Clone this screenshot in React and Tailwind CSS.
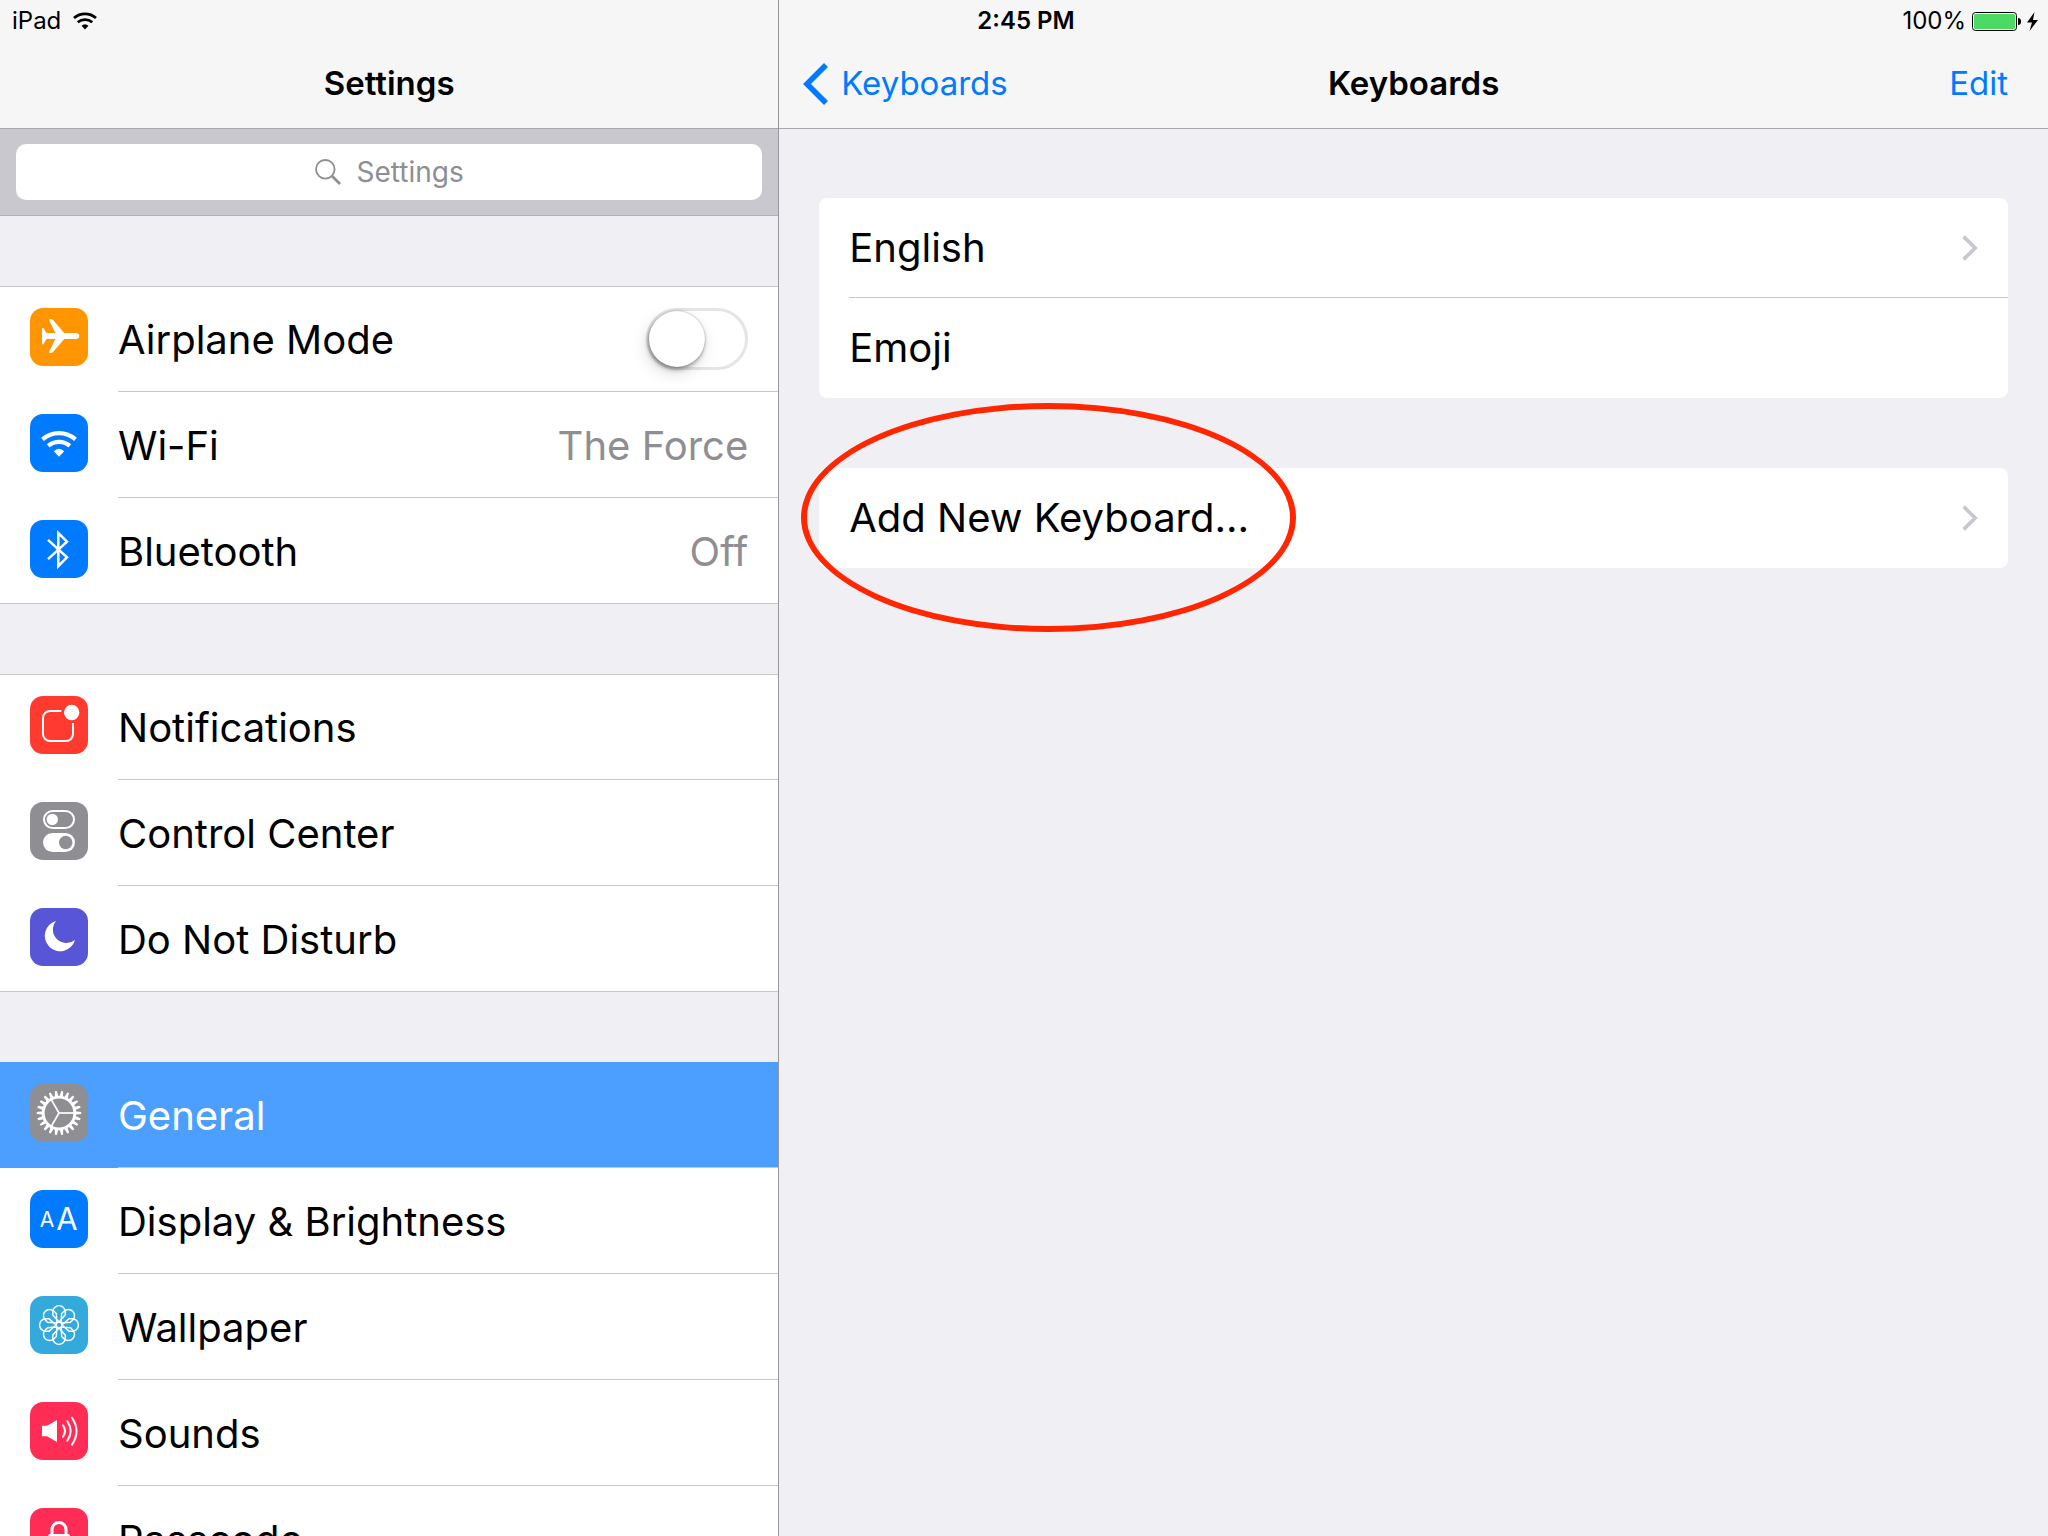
const tiles = {
  airplane: {
    color: "bg-[#ff9500]",
    art: (
      <path
        fill="currentColor"
        d="M12 20H13.5L16.5 25H25.3L19 12Q19 11 20 11H21.3Q22.2 11 23 12L34.3 25H46Q49.3 25.4 49.3 28T46 31H34.3L23 44Q22.2 45 21.3 45H20Q19 45 19 44L25.3 31H16.5L13.5 36.3H12Z"
      />
    ),
  },
  wifi: { color: "bg-[#007aff]", art: <WifiWaves /> },
  bluetooth: {
    color: "bg-[#007aff]",
    art: (
      <path
        stroke="currentColor"
        strokeWidth="2.5"
        d="M18 19.8L37 37.3L28.3 46.2V13L37 21.7L18 39.2"
      />
    ),
  },
  notifications: {
    color: "bg-[#ff3b30]",
    art: (
      <>
        <path
          stroke="currentColor"
          strokeWidth="2"
          d="M31.3 15H20A7 7 0 0 0 13 22V38A7 7 0 0 0 20 45H36A7 7 0 0 0 43 38V27"
        />
        <circle cx="41.7" cy="16.5" r="7.7" fill="currentColor" />
      </>
    ),
  },
  control: {
    color: "bg-[#8e8e93]",
    art: (
      <>
        <rect x="14" y="9" width="30" height="17" rx="8.5" stroke="currentColor" strokeWidth="2" />
        <circle cx="22.3" cy="17.5" r="5.7" fill="currentColor" />
        <rect x="13" y="31" width="32" height="19" rx="9.5" fill="currentColor" />
        <circle cx="35.7" cy="40.5" r="6.7" fill="#8e8e93" />
      </>
    ),
  },
  moon: {
    color: "bg-[#5856d6]",
    art: (
      <path
        fill="currentColor"
        d="M26 13A15.4 15.4 0 1 0 45 32A13.5 13.5 0 0 1 26 13Z"
      />
    ),
  },
  general: {
    color: "bg-[#8e8e93]",
    art: (
      <g stroke="currentColor">
        <circle cx="29" cy="29" r="15.8" strokeWidth="2.8" />
        {Array.from({ length: 22 }, (_, i) => (
          <path
            key={i}
            d="M45 27.2L51.2 28V30L45 30.8Z"
            fill="currentColor"
            stroke="none"
            transform={`rotate(${(i * 360) / 22} 29 29)`}
          />
        ))}
        {[0, 120, 240].map((angle) => (
          <path
            key={angle}
            d="M29 29H45"
            strokeWidth="1.7"
            transform={`rotate(${angle} 29 29)`}
          />
        ))}
      </g>
    ),
  },
  display: {
    color: "bg-[#007aff]",
    art: (
      <g fill="currentColor" textAnchor="middle">
        <text x="17" y="37" fontSize="21">A</text>
        <text x="37" y="40" fontSize="31">A</text>
      </g>
    ),
  },
  wallpaper: {
    color: "bg-[#34aadc]",
    art: (
      <g stroke="currentColor" strokeWidth="1.4">
        <circle cx="29" cy="29" r="3" />
        {[0, 45, 90, 135, 180, 225, 270, 315].map((angle) => (
          <path
            key={angle}
            d="M29 26L22.8 19V15.8A6.2 6.2 0 0 1 35.2 15.8V19Z"
            transform={`rotate(${angle} 29 29)`}
          />
        ))}
      </g>
    ),
  },
  sounds: {
    color: "bg-[#ff2d55]",
    art: (
      <>
        <path fill="currentColor" d="M12 23.7H17L27 18V40L17 34.3H12Z" />
        <path
          stroke="currentColor"
          strokeWidth="2"
          strokeLinecap="round"
          d="M33 23.3Q37 29 33 34.7M37.3 19.3Q44 29 37.3 38.7M42 15.7Q51 29 42 42.7"
        />
      </>
    ),
  },
  passcode: {
    color: "bg-[#ff2d55]",
    art: (
      <>
        <path stroke="currentColor" strokeWidth="3" d="M22 27V21.5A7 7 0 0 1 36 21.5V27" />
        <rect x="18" y="26" width="22" height="18" rx="2" fill="currentColor" />
      </>
    ),
  },
};

const groups = [
  [
    { icon: "airplane", label: "Airplane Mode", toggle: true },
    { icon: "wifi", label: "Wi-Fi", value: "The Force" },
    { icon: "bluetooth", label: "Bluetooth", value: "Off" },
  ],
  [
    { icon: "notifications", label: "Notifications" },
    { icon: "control", label: "Control Center" },
    { icon: "moon", label: "Do Not Disturb" },
  ],
  [
    { icon: "general", label: "General", selected: true },
    { icon: "display", label: "Display & Brightness" },
    { icon: "wallpaper", label: "Wallpaper" },
    { icon: "sounds", label: "Sounds" },
    { icon: "passcode", label: "Passcode" },
  ],
];

function WifiWaves() {
  return (
    <>
      <path
        stroke="currentColor"
        strokeWidth="4.2"
        d="M12.5 25.4A25 25 0 0 1 45.5 25.4M18.2 31.8A16.6 16.6 0 0 1 39.8 31.8"
      />
      <path fill="currentColor" d="M29 42.7L23.8 37.3Q29 32.3 34.2 37.3Z" />
    </>
  );
}

function Tile({ name }) {
  return (
    <span className={`size-[58px] shrink-0 rounded-[13px] text-white ${tiles[name].color}`}>
      <svg viewBox="0 0 58 58" fill="none" className="size-full" aria-hidden="true">
        {tiles[name].art}
      </svg>
    </span>
  );
}

function Switch({ id }) {
  return (
    <input
      id={id}
      type="checkbox"
      role="switch"
      className="h-[62px] w-[102px] appearance-none rounded-full border-3 border-[#e5e5e5] bg-white before:block before:size-14 before:rounded-full before:bg-white before:shadow-[0_0_2px_rgba(0,0,0,0.35),-1px_3px_4px_rgba(0,0,0,0.3),-2px_6px_16px_rgba(0,0,0,0.15)] checked:bg-[#4cd964] checked:before:ml-10"
    />
  );
}

function SidebarRow({ item, first, last }) {
  const Row = item.toggle ? "label" : "button";
  const top = first && !item.selected ? "border-t" : "";

  return (
    <Row
      htmlFor={item.toggle ? item.icon : undefined}
      className={`flex h-[106px] w-full items-stretch border-[#c8c7cc] text-left ${top} ${
        last ? "border-b" : ""
      } ${item.selected ? "bg-[#4c9fff] text-white" : "bg-white"}`}
    >
      <span
        className={`flex w-[118px] shrink-0 items-end pl-[30px] ${last ? "pb-[25px]" : "pb-[26px]"}`}
      >
        <Tile name={item.icon} />
      </span>
      <span
        className={`flex flex-1 items-center justify-between border-[#c8c7cc] pr-[30px] ${
          last ? "" : "border-b"
        }`}
      >
        <span className="pt-0.5">{item.label}</span>
        {item.toggle && <Switch id={item.icon} />}
        {item.value && <span className="pt-0.5 text-[#8e8e93]">{item.value}</span>}
      </span>
    </Row>
  );
}

function Chevron() {
  return (
    <svg viewBox="0 0 16 26" fill="none" className="h-[26px] w-4" aria-hidden="true">
      <path d="M1.6 1.6L13.2 13L1.6 24.4" stroke="#c7c7cc" strokeWidth="3.6" />
    </svg>
  );
}

function StatusBar() {
  return (
    <div className="absolute inset-x-0 top-0 grid h-[42px] grid-cols-3 items-center pr-2 pl-3 text-[24px]">
      <div className="flex items-center gap-3">
        iPad
        <svg viewBox="11 17 36 26" fill="none" className="h-[18px] w-6" aria-hidden="true">
          <WifiWaves />
        </svg>
      </div>
      <div className="text-center font-semibold">2:45 PM</div>
      <div className="flex items-center justify-end gap-1.5">
        100%
        <svg viewBox="0 0 68 19" className="h-[19px] w-[68px]" aria-hidden="true">
          <rect x="0.5" y="0.5" width="44" height="18" rx="3" fill="#fff" stroke="#000" />
          <rect x="2" y="2" width="41" height="15" rx="1.5" fill="#4cd964" />
          <path d="M46 6Q49 6 49 9.5T46 13Z" />
          <path d="M62.5 0L55 10.5H60L57.5 19L66 8H61Z" />
        </svg>
      </div>
    </div>
  );
}

function Sidebar() {
  return (
    <aside className="flex w-[38%] shrink-0 flex-col overflow-hidden">
      <header className="h-[129px] shrink-0 border-b border-[#a7a7aa] bg-[#f6f6f6] pt-10">
        <h1 className="flex h-[87px] items-center justify-center text-[33px] font-semibold">
          Settings
        </h1>
      </header>
      <div className="shrink-0 border-b border-[#b2b1b6] bg-[#c9c8ce] px-4 py-[15px]">
        <label className="flex h-14 items-center justify-center gap-4 rounded-[10px] bg-white text-[28px] text-[#8e8e93]">
          <svg viewBox="0 0 26 26" fill="none" stroke="currentColor" className="size-[26px]" aria-hidden="true">
            <circle cx="10.3" cy="10.3" r="9.3" strokeWidth="1.8" />
            <path d="M17 17L25 25" strokeWidth="2.6" />
          </svg>
          <input
            type="search"
            aria-label="Search settings"
            placeholder="Settings"
            className="field-sizing-content outline-none placeholder:text-[#8e8e93]"
          />
        </label>
      </div>
      <nav className="flex flex-col gap-[70px] pt-[70px] text-[40px]">
        {groups.map((items, i) => (
          <div key={i}>
            {items.map((item, j) => (
              <SidebarRow
                key={item.label}
                item={item}
                first={j === 0}
                last={j === items.length - 1}
              />
            ))}
          </div>
        ))}
      </nav>
    </aside>
  );
}

function Detail() {
  return (
    <main className="flex min-w-0 flex-1 flex-col border-l border-[#98979c]">
      <header className="h-[129px] border-b border-[#a7a7aa] bg-[#f6f6f6] pt-10">
        <div className="grid h-[87px] grid-cols-3 items-center px-6 text-[33px]">
          <button className="flex items-center gap-3 text-[#007aff]">
            <svg viewBox="0 0 26 42" fill="none" className="h-[42px] w-[26px]" aria-hidden="true">
              <path d="M23 2L4 21L23 40" stroke="currentColor" strokeWidth="5.6" />
            </svg>
            Keyboards
          </button>
          <h2 className="text-center font-semibold">Keyboards</h2>
          <button className="justify-self-end pr-4 text-[#007aff]">Edit</button>
        </div>
      </header>
      <div className="flex flex-col gap-[70px] px-10 pt-[69px] text-[40px]">
        <div className="rounded-lg bg-white pl-[30px]">
          <button className="flex h-[100px] w-full items-center justify-between border-b border-[#c8c7cc] pr-[30px]">
            English
            <Chevron />
          </button>
          <div className="flex h-[100px] items-center">Emoji</div>
        </div>
        <div className="relative rounded-lg bg-white pl-[30px]">
          <button className="flex h-[100px] w-full items-center justify-between pr-[30px]">
            Add New Keyboard...
            <Chevron />
          </button>
          {/* highlight ring */}
          <div className="pointer-events-none absolute -top-[65px] -left-[18px] h-[229px] w-[495px] rounded-[50%] border-6 border-[#ff2600]" />
        </div>
      </div>
    </main>
  );
}

export default function App() {
  return (
    <div className="relative flex h-screen overflow-hidden bg-[#efeff4] font-['Inter','Liberation_Sans',sans-serif] text-black">
      <Sidebar />
      <Detail />
      <StatusBar />
    </div>
  );
}
